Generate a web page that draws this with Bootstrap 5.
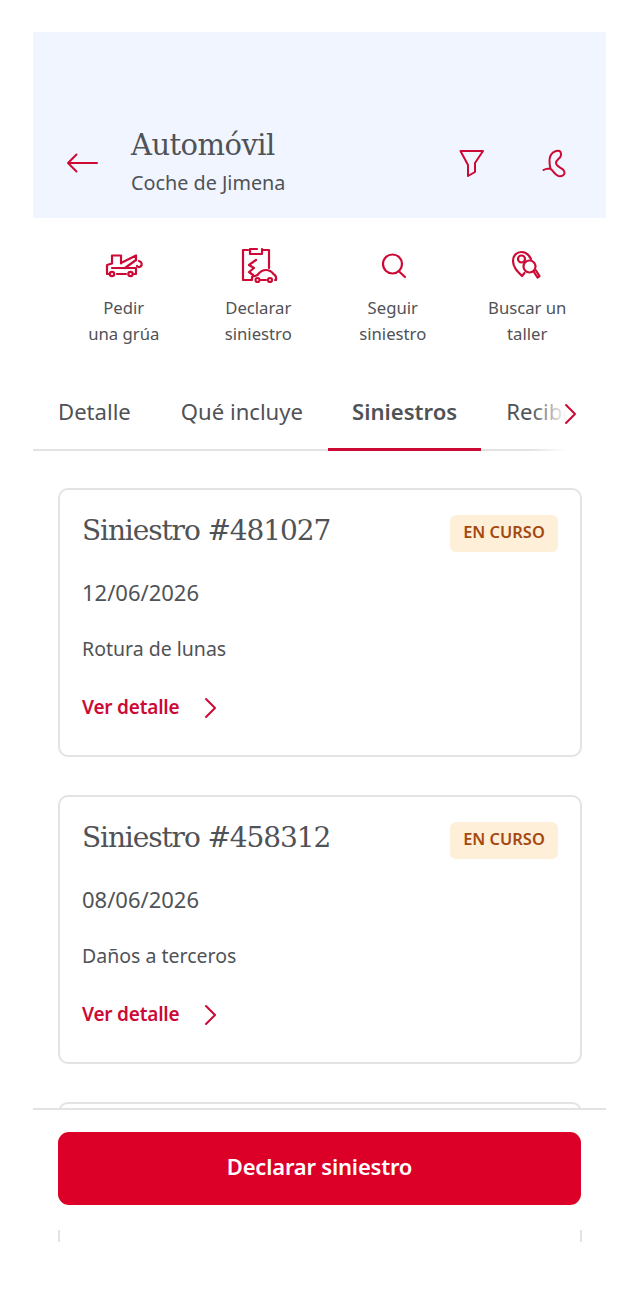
<!DOCTYPE html>
<html lang="es">
<head>
  <meta charset="UTF-8" />
  <title>Automóvil</title>
  <meta name="viewport" content="width=device-width, initial-scale=1">
  <link href="https://cdn.jsdelivr.net/npm/bootstrap@5.3.3/dist/css/bootstrap.min.css" rel="stylesheet">
  <style>
    body { background: #fff; color: #4f5256; font-family: "Noto Sans", sans-serif; }
    svg { display: block; fill: none; stroke: #cc0a35; stroke-width: 2; stroke-linecap: round; stroke-linejoin: round; }
    .frame { width: 573px; height: 1210px; margin: 32px 0 0 33px; overflow: hidden; position: relative; }
    .head-box { height: 186px; background: #f0f5ff; padding: 96px 31px 0 33px; }
    .head-title { font-family: "DejaVu Serif", serif; font-size: 29px; line-height: 34px; letter-spacing: -.55px; }
    .head-sub { font-size: 19.8px; line-height: 26px; margin-top: 8px; }
    .back-col { width: 65px; padding-top: 23px; }
    .head-icons { gap: 43px; padding-top: 12px; }
    .act-row { padding: 27px 6px 0 23.5px; height: 161px; }
    .act-item { width: 134.5px; font-size: 16.7px; line-height: 26px; text-align: center; }
    .act-ico { height: 40px; margin-bottom: 10px; }
    .act-ico svg { stroke-width: 2.2; }
    .tab-wrap { height: 72px; position: relative; margin-bottom: 37px; }
    .tab-row { height: 100%; overflow: hidden; box-shadow: inset 0 -2px 0 #e3e3e3; }
    .tab-item { font-size: 22.1px; line-height: 30px; padding: 17px 25px 0; white-space: nowrap; }
    .tab-on { font-weight: 600; border-bottom: 3px solid #cc0a35; padding-left: 24px; padding-right: 24px; }
    .tab-fade { position: absolute; right: 0; top: 0; width: 94px; height: 100%; background: linear-gradient(90deg, rgba(255,255,255,0) 20%, #fff 58%); }
    .tab-arrow { position: absolute; right: 29px; top: 24px; }
    .claim { border: 2px solid #e3e3e3; border-radius: 10px; margin: 0 24px 38px 25px; height: 269px; padding: 22px 22px 0; }
    .claim-title { font-family: "DejaVu Serif", serif; font-size: 28px; line-height: 36px; letter-spacing: -1.1px; padding-top: 1px; }
    .claim-tag { background: #feefd9; color: #a5480f; font-size: 16.4px; font-weight: 600; border-radius: 6px; height: 37px; line-height: 34px; width: 108px; text-align: center; margin-top: 3px; }
    .claim-date { font-size: 22px; line-height: 28px; margin-top: 26px; }
    .claim-desc { font-size: 19.5px; line-height: 28px; margin-top: 29px; }
    .claim-link { color: #cc0a35; font-size: 19px; font-weight: 600; line-height: 28px; margin-top: 30px; gap: 24px; text-decoration: none; letter-spacing: -.2px; }
    .claim-link svg { margin-top: 2px; }
    .claim-last { height: 300px; margin-bottom: 0; }
    .foot-bar { position: absolute; left: 0; right: 0; bottom: 12px; height: 122px; background: #fff; border-top: 2px solid #e3e3e3; padding: 22px 25px 0; }
    .btn-red { background: #dc0028; color: #fff; font-size: 22px; font-weight: 600; height: 73px; line-height: 53px; padding-bottom: 10px; border-radius: 11px; border: 0; letter-spacing: -.2px; }
    .btn-red:hover { background: #dc0028; color: #fff; }
  </style>
</head>
<body>
  <div class="frame">
    <div class="head-box d-flex">
      <div class="back-col">
        <svg width="32" height="24" viewBox="0 0 32 24"><path d="M31 12H2M10.500 3.500L2 12l8.500 8.500"/></svg>
      </div>
      <div class="flex-grow-1">
        <div class="head-title">Automóvil</div>
        <div class="head-sub">Coche de Jimena</div>
      </div>
      <div class="head-icons d-flex align-items-start">
        <svg width="40" height="40" viewBox="452 140 40 40"><path d="M460.500 151h22.500l-8 12v9l-7 4v-11l-7.500-14"/></svg>
        <svg width="40" height="40" viewBox="535 140 40 40"><path d="M543.500 170c2.500-1.500 5-1.500 6.500-1.500 2.500 1 4.500 6.500 8.500 7.500 3 .5 6-.5 6-3 0-1.500-1-3-1.500-3.500-2.500-2-7-3.500-7-6.500 0-2.500 2-3.500 4-5.500 1.500-1.500 1.500-5.500-.5-6.500-2-.8-4.500 0-6.500 1.500-3 2.500-3.500 6-3.500 8.500 0 3 .5 6 1 8"/></svg>
      </div>
    </div>

    <div class="act-row d-flex">
      <a class="act-item text-decoration-none text-reset">
        <div class="act-ico d-flex justify-content-center">
          <svg width="48" height="40" viewBox="100 245 48 40"><path d="M109 274h-2v-9l5-1.500v-8h9v8M112 268h24v5M121 263l15-7.500v5M125 268l11-8"/><path d="M139 261c3 1 3.500 4 1.500 5.500-1.500 1-3 .5-3.500-.5"/><path d="M117 274h9M134 274h2"/><circle cx="112" cy="274" r="2.200"/><circle cx="130.500" cy="274" r="2.200"/></svg>
        </div>
        Pedir<br>una grúa
      </a>
      <a class="act-item text-decoration-none text-reset">
        <div class="act-ico d-flex justify-content-center">
          <svg width="44" height="40" viewBox="236 245 44 40"><path d="M248 250h-5v30h8M262 250h7v18M250 249v5h12v-5M250 249h7"/><path d="M256 260l-7 5 5 3-5 4 4 3"/><path d="M252 280v-3c1-1 4-1 5.500-2 3-4 5.500-5 8.500-5 4 0 6 2 7.500 4 2 1 3 3 2.500 6h-1"/><path d="M261 280h5"/><circle cx="257.500" cy="280" r="2"/><circle cx="270" cy="280" r="2"/></svg>
        </div>
        Declarar<br>siniestro
      </a>
      <a class="act-item text-decoration-none text-reset">
        <div class="act-ico d-flex justify-content-center">
          <svg width="40" height="40" viewBox="372 245 40 40"><circle cx="391.500" cy="264" r="9.500"/><path d="M397.500 271l6.500 6"/></svg>
        </div>
        Seguir<br>siniestro
      </a>
      <a class="act-item text-decoration-none text-reset">
        <div class="act-ico d-flex justify-content-center">
          <svg width="40" height="40" viewBox="507 245 40 40"><path d="M522 276c-5-5-9-9-9-15 0-6 4-9 8.500-9s7.500 3 9.500 7M522 276l2.500-3"/><circle cx="521.500" cy="259" r="3.500"/><circle cx="529.500" cy="266.500" r="6"/><path d="M534 272l3.500 5.500 2-1.500-3.500-5.500"/></svg>
        </div>
        Buscar un<br>taller
      </a>
    </div>

    <div class="tab-wrap">
      <div class="tab-row d-flex">
        <div class="tab-item">Detalle</div>
        <div class="tab-item">Qué incluye</div>
        <div class="tab-item tab-on">Siniestros</div>
        <div class="tab-item">Recibos</div>
      </div>
      <div class="tab-fade"></div>
      <svg class="tab-arrow" width="14" height="22" viewBox="0 0 14 22"><path d="M3 2l9 9-9 9"/></svg>
    </div>

    <div class="claim">
      <div class="d-flex justify-content-between">
        <div class="claim-title">Siniestro #481027</div>
        <div class="claim-tag">EN CURSO</div>
      </div>
      <div class="claim-date">12/06/2026</div>
      <div class="claim-desc">Rotura de lunas</div>
      <a class="claim-link d-flex align-items-center">Ver detalle <svg width="14" height="22" viewBox="0 0 14 22"><path d="M3 2l9 9-9 9"/></svg></a>
    </div>
    <div class="claim">
      <div class="d-flex justify-content-between">
        <div class="claim-title">Siniestro #458312</div>
        <div class="claim-tag">EN CURSO</div>
      </div>
      <div class="claim-date">08/06/2026</div>
      <div class="claim-desc">Daños a terceros</div>
      <a class="claim-link d-flex align-items-center">Ver detalle <svg width="14" height="22" viewBox="0 0 14 22"><path d="M3 2l9 9-9 9"/></svg></a>
    </div>
    <div class="claim claim-last"></div>

    <div class="foot-bar">
      <button class="btn btn-red w-100">Declarar siniestro</button>
    </div>
  </div>
  <script src="https://cdn.jsdelivr.net/npm/bootstrap@5.3.3/dist/js/bootstrap.bundle.min.js"></script>
</body>
</html>
